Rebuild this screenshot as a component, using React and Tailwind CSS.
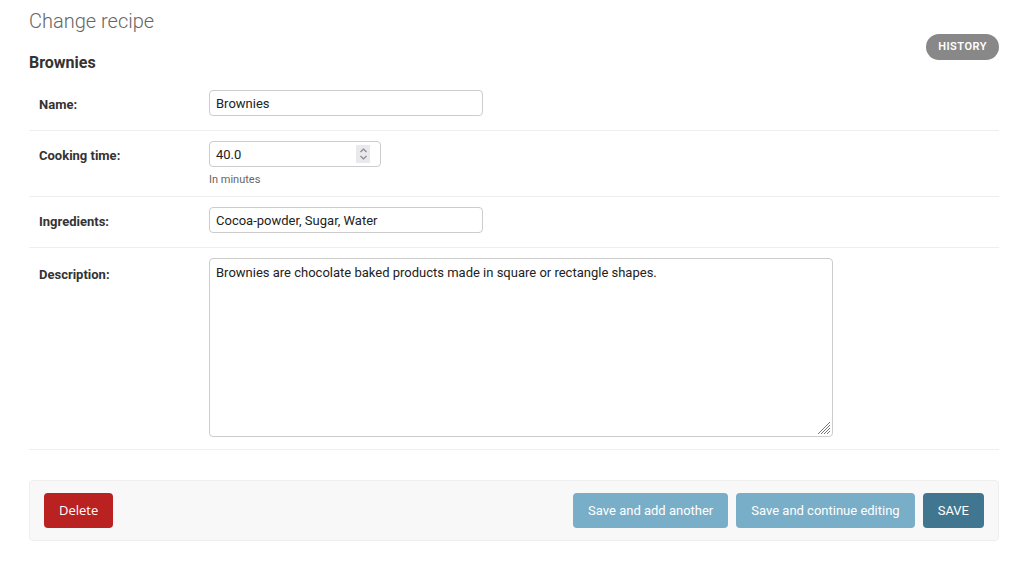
import React from 'react';

const FormRow = ({ label, children }) => (
  <div className="flex items-start px-[10px] pt-[10px] pb-[14px] border-b border-[#eee]">
    <label className="w-[170px] shrink-0 pt-[7px] text-[13px] leading-[16px] font-bold text-[#333]">
      {label}
    </label>
    <div className="flex flex-col">{children}</div>
  </div>
);

const inputClass =
  'h-[26px] px-[6px] border border-[#ccc] rounded-[4px] bg-white text-[13px] text-[#222] outline-none';

const App = () => {
  return (
    <div className="min-h-[577px] bg-white pl-[29px] pr-[25px] font-['Roboto',sans-serif] text-[#333]">
      {/* Page title */}
      <h1 className="pt-[9px] text-[20px] leading-[24px] font-light text-[#666]">Change recipe</h1>

      {/* Object name + tools */}
      <div className="flex items-start justify-between">
        <h2 className="mt-[21px] mb-[8px] text-[16px] leading-[18px] font-bold text-[#333]">Brownies</h2>
        <a className="mt-[1px] h-[26px] px-[12px] flex items-center rounded-full bg-[#888] text-white text-[11px] font-semibold tracking-[0.5px] uppercase">
          History
        </a>
      </div>

      {/* Fieldset */}
      <fieldset>
        <FormRow label="Name:">
          <input className={`${inputClass} w-[274px]`} defaultValue="Brownies" />
        </FormRow>
        <div className="flex items-start px-[10px] pt-[10px] pb-[9px] border-b border-[#eee]">
          <label className="w-[170px] shrink-0 pt-[7px] text-[13px] leading-[16px] font-bold text-[#333]">
            Cooking time:
          </label>
          <div className="flex flex-col">
            <div className="relative w-[172px]">
              <input className={`${inputClass} w-[172px]`} defaultValue="40.0" />
              {/* spinner */}
              <div className="absolute left-[147px] top-[4px] w-[14px] h-[18px] bg-[#e9e9ed] flex flex-col items-center justify-center">
                <svg width="9" height="14" viewBox="0 0 9 14" fill="none" stroke="#8a8a8a" strokeWidth="1.2">
                  <path d="M1.5 5 L4.5 2 L7.5 5" />
                  <path d="M1.5 9 L4.5 12 L7.5 9" />
                </svg>
              </div>
            </div>
            <div className="mt-[6px] text-[11px] leading-[14px] text-[#666]">In minutes</div>
          </div>
        </div>
        <FormRow label="Ingredients:">
          <input className={`${inputClass} w-[274px]`} defaultValue="Cocoa-powder, Sugar, Water" />
        </FormRow>
        <div className="flex items-start px-[10px] pt-[10px] pb-[12px] border-b border-[#eee]">
          <label className="w-[170px] shrink-0 pt-[9px] text-[13px] leading-[16px] font-bold text-[#333]">
            Description:
          </label>
          <div className="relative">
            <textarea
              className="block w-[624px] h-[179px] px-[6px] py-[5px] border border-[#ccc] rounded-[4px] text-[13px] leading-[18px] text-[#222] outline-none resize-none"
              defaultValue="Brownies are chocolate baked products made in square or rectangle shapes."
            />
            {/* resize grip */}
            <svg className="absolute right-[2px] bottom-[2px]" width="14" height="14" viewBox="0 0 14 14" stroke="#777" strokeWidth="1">
              <path d="M13 1 L1 13" />
              <path d="M13 4 L4 13" />
              <path d="M13 7 L7 13" />
              <path d="M13 10 L10 13" />
            </svg>
          </div>
        </div>
      </fieldset>

      {/* Submit row */}
      <div className="mt-[30px] flex items-center justify-between px-[14px] pt-[12px] pb-[12px] bg-[#f8f8f8] border border-[#eee] rounded-[4px]">
        <a className="h-[35px] px-[15px] flex items-center rounded-[4px] bg-[#ba2121] text-white text-[13px] font-['Open_Sans',sans-serif]">
          Delete
        </a>
        <div className="flex items-center gap-[8px]">
          <button className="h-[35px] px-[15px] rounded-[4px] bg-[#79aec8] text-white text-[13px]">
            Save and add another
          </button>
          <button className="h-[35px] px-[15px] rounded-[4px] bg-[#79aec8] text-white text-[13px]">
            Save and continue editing
          </button>
          <button className="h-[35px] px-[15px] rounded-[4px] bg-[#417690] text-white text-[13px]">
            SAVE
          </button>
        </div>
      </div>
    </div>
  );
};

export default App;
